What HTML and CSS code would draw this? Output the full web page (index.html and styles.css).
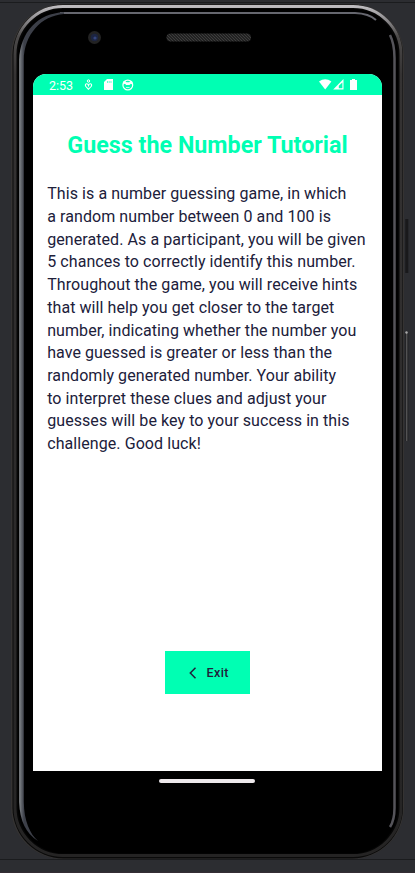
FILE: index.html
```html
<!DOCTYPE html>
<html lang="en">
<head>
<meta charset="utf-8">
<title>Guess the Number Tutorial</title>
<link rel="stylesheet" href="styles.css">
</head>
<body>
<svg class="device" viewBox="0 0 415 873" aria-hidden="true">
  <defs>
    <linearGradient id="rim" x1="0" y1="0" x2="0" y2="1">
      <stop offset="0" stop-color="#bdbbbf"/><stop offset=".012" stop-color="#9a989b"/><stop offset=".035" stop-color="#4c4a4a"/><stop offset=".08" stop-color="#353333"/><stop offset="1" stop-color="#252424"/>
    </linearGradient>
    <linearGradient id="left" gradientUnits="userSpaceOnUse" x1="19" y1="0" x2="24" y2="0">
      <stop offset="0" stop-color="#999da0"/><stop offset=".35" stop-color="#696d73"/><stop offset="1" stop-color="#3c3f48"/>
    </linearGradient>
    <pattern id="mesh" width="3" height="3" patternUnits="userSpaceOnUse">
      <rect width="3" height="3" fill="#222"/><path d="M0 0l3 3" stroke="#444" stroke-width=".8"/>
    </pattern>
  </defs>
  <path d="M0 2.500H415M0 859.500H415" stroke="#1b1c1e"/>
  <path d="M0 872.500H415" stroke="#342d34"/>
  <path d="M406.800 219V273" stroke="#19191b" stroke-width="3"/>
  <path d="M406.800 333V441" stroke="#202022" stroke-width="3"/>
  <path d="M406.800 333V441" stroke="#68696a"/>
  <circle cx="406.500" cy="332.500" r="1.200" fill="#aaa"/>
  <rect x="11" y="4" width="393" height="855" rx="52" fill="#353332"/>
  <rect x="12.500" y="4.500" width="390.500" height="854" rx="51" fill="#0a0a0a"/>
  <rect x="15" y="6.500" width="386" height="849" rx="48" fill="#060606" stroke="url(#rim)" stroke-width="3"/>
  <rect x="18" y="9" width="380" height="844.500" rx="46" fill="#000"/>
  <path d="M60 13H355Q369 13.500 376 20" fill="none" stroke="#66676f" stroke-width="2"/>
  <path d="M19.200 802V60C20 32 38 13 64 12.200V14C41 15.500 24 35 23.800 60V802C24 821 30 834 38 841Q20 830 19.200 802Z" fill="url(#left)"/>
  <path d="M390 35Q394.500 44 394.500 58V808Q394.500 820 390 827" fill="none" stroke="#55545a" stroke-width="2.500"/>
  <circle cx="94.500" cy="37.500" r="6.500" fill="#232323"/>
  <circle cx="94.500" cy="37.500" r="3.700" fill="#1d2542"/>
  <circle cx="95" cy="38" r="1.600" fill="#34457c"/>
  <rect x="166.500" y="33.500" width="84.500" height="8" rx="4" fill="url(#mesh)"/>
</svg>
<main class="screen">
  <header class="status">
    <span class="time">2:53</span>
    <svg class="left-icons" viewBox="0 0 52 14" fill="none">
      <circle cx="4.500" cy="3" r="1.200" stroke="#fff"/>
      <path d="M4.500 11.300L1.700 8.300Q.8 6.200 2.500 5.800Q4 5.700 4.500 7.500Q5 5.700 6.500 5.800Q8.200 6.200 7.300 8.300Z" stroke="#fff" stroke-width="1.100"/>
      <path d="M23 1H29V12H20V4Z" fill="#fff"/>
      <path d="M23.500 3V5M25.200 3V5M27 3V5" stroke="#00ffb3" stroke-width=".6"/>
      <circle cx="43.800" cy="7" r="4.900" stroke="#fff" stroke-width="1.200"/>
      <path d="M39.200 3.500L41.200 3L42.500 4.300H45.200L46.500 3L48.300 3.500V6.500L46.800 5.800L45.500 7H42.200L41 5.800L39.200 6.500Z" fill="#fff"/>
      <path d="M42 9.500H45.600" stroke="#fff" stroke-width=".7"/>
    </svg>
    <svg class="right-icons" viewBox="0 0 40 14">
      <path d="M0 3.500Q6.200-.8 12.400 3.500L6.200 11.500Z" fill="#fff"/>
      <path d="M24.500 1V11.500H14.200Z" fill="#fff"/>
      <path d="M23.400 4.500V10.300H19.800V7.800Z" fill="#00ffb3"/>
      <path d="M31 2H33V1H36V2H38V12H31Z" fill="#fff"/>
    </svg>
  </header>
  <h1>Guess the Number Tutorial</h1>
  <p>This is a number guessing game, in which<br>a random number between 0 and 100 is<br>generated. As a participant, you will be given<br>5 chances to correctly identify this number.<br>Throughout the game, you will receive hints<br>that will help you get closer to the target<br>number, indicating whether the number you<br>have guessed is greater or less than the<br>randomly generated number. Your ability<br>to interpret these clues and adjust your<br>guesses will be key to your success in this<br>challenge. Good luck!</p>
  <button class="exit" type="button">
    <svg viewBox="0 0 8 12"><path d="M6.500 .8L1.300 6L6.500 11.200" fill="none" stroke="#20203a" stroke-width="1.500"/></svg>
    <span>Exit</span>
  </button>
</main>
<div class="home-bar"></div>
</body>
</html>
```
FILE: styles.css
```css
* { box-sizing: border-box; }
body {
  margin: 0;
  width: 415px;
  height: 873px;
  overflow: hidden;
  padding-top: 74px;
  background: #2c2d31;
  font-family: Roboto, sans-serif;
}
.device {
  position: absolute;
  inset: 0;
  width: 415px;
  height: 873px;
  z-index: -1;
}
.screen {
  display: flex;
  flex-direction: column;
  width: 349px;
  height: 697px;
  margin-left: 33px;
  background: #fff;
  border-radius: 13px 13px 0 0;
  overflow: hidden;
}
.status {
  display: flex;
  flex: none;
  height: 21px;
  padding: 4px 23px 0 16px;
  background: #00ffb3;
}
.time {
  width: 35px;
  color: #fff;
  font-size: 12.5px;
  line-height: 15px;
}
.left-icons { width: 52px; height: 14px; }
.right-icons { width: 40px; height: 14px; margin-left: auto; }
h1 {
  margin: 36px 0 0;
  color: #00ffb3;
  font-size: 23.3px;
  font-weight: 700;
  line-height: 28px;
  text-align: center;
  white-space: nowrap;
}
p {
  margin: 24.3px 0 0 14.2px;
  color: #20203a;
  font-size: 16px;
  line-height: 22.7px;
  letter-spacing: 0.075px;
  white-space: nowrap;
}
.exit {
  display: flex;
  align-items: center;
  justify-content: center;
  gap: 10px;
  width: 85.5px;
  height: 43px;
  margin: auto 0 77px 131.5px;
  padding: 1px 0 0 3px;
  border: 0;
  background: #00ffb3;
  color: #20203a;
  font: 500 12.5px/16px Roboto, sans-serif;
  letter-spacing: 0.4px;
}
.exit svg { width: 8px; height: 12px; }
.home-bar {
  width: 96px;
  height: 4px;
  margin: 8px 0 0 159px;
  border-radius: 2px;
  background: #eee9ec;
}
```
